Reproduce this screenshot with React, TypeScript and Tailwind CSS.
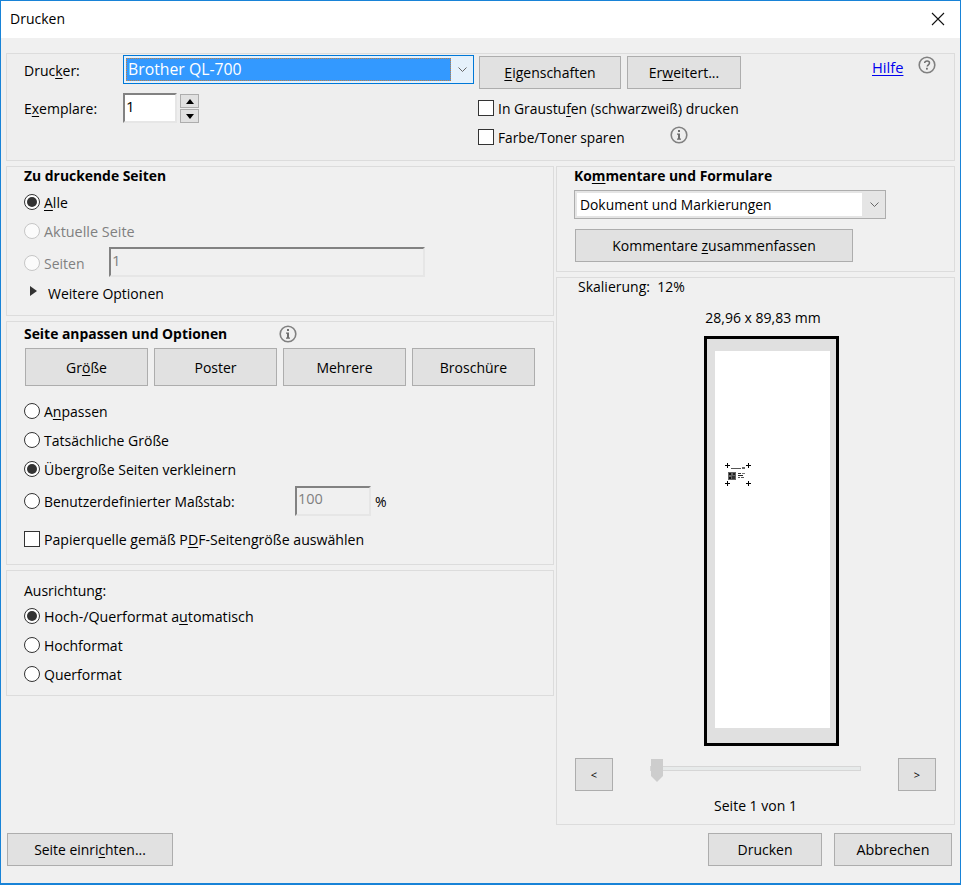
import React from "react";

const Key = ({ children }: { children: React.ReactNode }) => <span className="underline underline-offset-2 decoration-1">{children}</span>;

const Btn = ({ w, h = "h-[33px]", className = "", children }: { w: string; h?: string; className?: string; children: React.ReactNode }) => (
  <button className={`${w} ${h} ${className} shrink-0 flex items-center justify-center pt-[1px] bg-[#e1e1e1] border border-[#adadad] text-black`}>{children}</button>
);

const Radio = ({ checked = false, disabled = false }: { checked?: boolean; disabled?: boolean }) => (
  <span className={`w-4 h-4 shrink-0 rounded-full border flex items-center justify-center ${disabled ? "border-[#c6c6c6] bg-[#fbfbfb]" : "border-[#333333] bg-white"}`}>
    {checked && <span className="w-[10px] h-[10px] rounded-full bg-[#333333]" />}
  </span>
);

const Check = () => <span className="w-4 h-4 shrink-0 border border-[#333333] bg-white block" />;

const Info = ({ className = "" }: { className?: string }) => (
  <svg viewBox="0 0 18 18" className={`w-[18px] h-[18px] shrink-0 ${className}`} fill="none">
    <circle cx="9" cy="9" r="7.8" stroke="#808080" strokeWidth="1.6" />
    <rect x="8" y="4" width="2" height="2" fill="#6e6e6e" />
    <path d="M7 7.6h3v5h1v1.2H7v-1.2h1V8.8H7z" fill="#6e6e6e" />
  </svg>
);

const Help = () => (
  <svg viewBox="0 0 18 18" className="w-[18px] h-[18px] shrink-0" fill="none">
    <circle cx="9" cy="9" r="7.8" stroke="#808080" strokeWidth="1.6" />
    <path d="M6.6 7c.2-1.3 1.2-2 2.5-2 1.4 0 2.4.8 2.4 2 0 1.800-2.300 1.800-2.300 3.600" stroke="#6e6e6e" strokeWidth="1.5" />
    <rect x="8" y="11.800" width="1.800" height="1.800" fill="#6e6e6e" />
  </svg>
);

const Chevron = () => (
  <svg viewBox="0 0 9 5" className="w-[9px] h-[5px] ml-[3px]" fill="none"><path d="M.5.5l4 4 4-4" stroke="#666666" /></svg>
);

const RadioRow = ({ h, checked, disabled, children }: { h: string; checked?: boolean; disabled?: boolean; children: React.ReactNode }) => (
  <div className={`flex items-center gap-1 ${h} ${disabled ? "text-[#808080]" : ""}`}>
    <Radio checked={checked} disabled={disabled} />
    <span className="pt-[2px]">{children}</span>
  </div>
);

const Section = ({ className = "", children }: { className?: string; children: React.ReactNode }) => (
  <section className={`border border-[#dcdcdc] ${className}`}>{children}</section>
);

const Thumbnail = () => (
  <svg viewBox="0 0 26 24" className="w-[26px] h-[24px]" shapeRendering="crispEdges">
    <path d="M2 0v5M0 2.500h5M23 0v5M21 2.500h5M2 18v5M0 20.500h5M23 18v5M21 20.500h5" stroke="#000000" strokeWidth="1" />
    <rect x="6" y="5" width="10" height="1" fill="#555555" />
    <rect x="17" y="4" width="3" height="2" fill="#666666" />
    <rect x="3" y="9" width="8" height="8" fill="#666666" />
    <rect x="4" y="10" width="2" height="2" fill="#111111" />
    <rect x="8" y="10" width="2" height="2" fill="#222222" />
    <rect x="4" y="14" width="2" height="2" fill="#111111" />
    <rect x="7" y="13" width="3" height="3" fill="#333333" />
    <rect x="13" y="10" width="3" height="1" fill="#333333" />
    <rect x="17" y="10" width="3" height="1" fill="#777777" />
    <rect x="13" y="12" width="5" height="1" fill="#222222" />
    <rect x="13" y="14" width="2" height="1" fill="#555555" />
    <rect x="16" y="14" width="3" height="1" fill="#555555" />
  </svg>
);

export default function App() {
  return (
    <div className="w-[961px] h-[885px] box-border border border-[#1883d7] border-b-2 bg-[#f0f0f0] flex flex-col font-['Open_Sans','Noto_Sans',sans-serif] text-[14px] leading-[18px] text-black overflow-hidden">
      <header className="h-[37px] shrink-0 bg-white flex items-center justify-between pl-[9px] pr-[15px] pb-[1px]">
        <span>Drucken</span>
        <svg viewBox="0 0 14 14" className="w-[14px] h-[14px]" fill="none"><path d="M1 1l12 12M13 1L1 13" stroke="#111111" strokeWidth="1.1" /></svg>
      </header>

      <Section className="mt-[15px] ml-[5px] mr-[5px] h-[108px] shrink-0 bg-[#eeeeee] flex">
        <div className="w-[472px] shrink-0 pl-[17px] pt-[1px]">
          <div className="flex items-center">
            <span className="w-[99px] shrink-0 pt-[3px]">Druc<Key>k</Key>er:</span>
            <div className="w-[351px] h-[29px] border border-[#0078d7] bg-[#e5f1fb] flex items-center p-[2px]">
              <div className="w-[325px] h-[23px] bg-[#3399ff] text-white text-[15.8px] pl-[1px] flex items-center border border-dotted border-[#c08040]"><span className="-mt-[1px]">Brother QL-700</span></div>
              <div className="flex-1 flex justify-center"><Chevron /></div>
            </div>
          </div>
          <div className="flex items-start mt-[9px]">
            <span className="w-[99px] shrink-0 pt-[7px]">E<Key>x</Key>emplare:</span>
            <div className="w-[54px] h-[30px] border-2 border-[#828282] border-r-[#e6e6e6] border-b-[#e6e6e6] bg-white pl-[1px] text-[15px] leading-[22px]">1</div>
            <div className="ml-[3px] mt-[1px] flex flex-col gap-[1px]">
              <div className="w-[19px] h-[14px] bg-[#e1e1e1] border border-[#adadad] flex items-center justify-center"><span className="w-0 h-0 border-x-[4px] border-x-transparent border-b-[5px] border-b-black" /></div>
              <div className="w-[19px] h-[14px] bg-[#e1e1e1] border border-[#adadad] flex items-center justify-center"><span className="w-0 h-0 border-x-[4px] border-x-transparent border-t-[5px] border-t-black" /></div>
            </div>
          </div>
        </div>
        <div className="w-[263px] shrink-0 ml-[-1px] pt-[2px]">
          <div className="flex gap-[6px] pl-[1px]">
            <Btn w="w-[142px]"><span><Key>E</Key>igenschaften</span></Btn>
            <Btn w="w-[114px]"><span>Er<Key>w</Key>eitert...</span></Btn>
          </div>
          <div className="flex items-center gap-1 mt-[11px] h-4"><Check /><span className="text-[13.9px] pt-[1px]">In Graustu<Key>f</Key>en (schwarzweiß) drucken</span></div>
          <div className="flex items-center gap-1 mt-[13px] h-4">
            <Check /><span className="w-[130px] shrink-0 whitespace-nowrap pt-[1px] text-[13.7px]">Farbe/Toner sparen</span><Info className="ml-[38px] -mt-[4px]" />
          </div>
        </div>
        <div className="ml-[131px] flex gap-[14px] pt-[2px] items-start">
          <a className="w-[32px] text-[14.7px] text-[#0000ee] underline underline-offset-2 mt-[2px]">Hilfe</a>
          <Help />
        </div>
      </Section>

      <div className="flex mt-[5px] ml-[5px] mr-[5px] gap-[2px]">
        <div className="w-[548px] shrink-0 flex flex-col gap-[5px]">
          <Section className="h-[150px] pl-[17px]">
            <div className="font-bold text-[13.9px] leading-[18px]">Zu druckende Seiten</div>
            <RadioRow h="h-[29px] mt-[2px]" checked><Key>A</Key>lle</RadioRow>
            <RadioRow h="h-[29px] text-[14.4px]" disabled>Aktuelle Seite</RadioRow>
            <div className="flex items-center h-[31px] mt-[1px]">
              <div className="w-[85px] shrink-0 self-center pt-[2px]"><RadioRow h="h-[29px]" disabled>Seiten</RadioRow></div>
              <div className="w-[316px] h-[30px] border-2 border-[#828282] border-r-[#e6e6e6] border-b-[#e6e6e6] pl-[1px] text-[15px] text-[#808080] leading-[22px]">1</div>
            </div>
            <div className="flex items-center h-[30px] pl-[6px]">
              <span className="w-0 h-0 border-y-[5px] border-y-transparent border-l-[7px] border-l-[#333333] -mt-[3px]" />
              <span className="ml-[11px] pt-[3px]">Weitere Optionen</span>
            </div>
          </Section>

          <Section className="h-[244px] pl-[17px]">
            <div className="flex items-center h-[22px] mt-[1px]">
              <span className="w-[246px] shrink-0 font-bold text-[13.9px] whitespace-nowrap">Seite anpassen und Optionen</span>
              <Info className="ml-[9px] -mt-[1px]" />
            </div>
            <div className="flex gap-[6px] mt-[3px] pl-[1px]">
              <Btn w="w-[123px]" h="h-[38px]"><span>Gr<Key>ö</Key>ße</span></Btn>
              <Btn w="w-[123px]" h="h-[38px]">Poster</Btn>
              <Btn w="w-[123px]" h="h-[38px]">Mehrere</Btn>
              <Btn w="w-[123px]" h="h-[38px]">Broschüre</Btn>
            </div>
            <RadioRow h="h-[29px] mt-[10px]">A<Key>n</Key>passen</RadioRow>
            <RadioRow h="h-[29px]">Tatsächliche Größe</RadioRow>
            <RadioRow h="h-[29px]" checked>Übergroße Seiten verkleinern</RadioRow>
            <div className="flex items-center h-[30px] mt-[3px]">
              <div className="w-[271px] shrink-0 text-[13.86px]"><RadioRow h="h-[30px]">Benutzerdefinierter Maßstab:</RadioRow></div>
              <div className="w-[76px] h-[30px] border-2 border-[#828282] border-r-[#e6e6e6] border-b-[#e6e6e6] pl-[1px] text-[14.5px] text-[#808080] leading-[22px]">100</div>
              <span className="ml-[4px] pt-[2px]">%</span>
            </div>
            <div className="flex items-center gap-1 h-4 mt-[15px]"><Check /><span className="text-[14.15px] pt-[2px]">Papierquelle gemäß P<Key>D</Key>F-Seitengröße auswählen</span></div>
          </Section>

          <Section className="h-[126px] pl-[17px]">
            <div className="h-[18px] mt-[11px]">Ausrichtung:</div>
            <RadioRow h="h-[29px] mt-[1px] text-[14.25px]" checked>Hoch-/Querformat a<Key>u</Key>tomatisch</RadioRow>
            <RadioRow h="h-[29px]">Hochformat</RadioRow>
            <RadioRow h="h-[29px]">Querformat</RadioRow>
          </Section>
        </div>

        <div className="flex-1 flex flex-col gap-[5px]">
          <Section className="h-[106px] pl-[17px]">
            <div className="font-bold text-[13.9px] leading-[18px]">Ko<Key>m</Key>mentare und Formulare</div>
            <div className="w-[312px] h-[29px] mt-[5px] border border-[#adadad] bg-[#e5e5e5] flex items-center p-[2px]">
              <div className="w-[285px] h-[23px] bg-white text-[13.85px] pl-[3px] flex items-center">Dokument und Markierungen</div>
              <div className="flex-1 flex justify-center"><Chevron /></div>
            </div>
            <Btn w="w-[278px]" className="mt-[10px] ml-[1px]"><span>Kommentare <Key>z</Key>usammenfassen</span></Btn>
          </Section>

          <Section className="h-[548px] flex flex-col items-center">
            <div className="self-start pl-[21px] h-[18px]">Skalierung:&nbsp;&nbsp;12%</div>
            <div className="mt-[13px] h-[18px] ml-[15px]">28,96 x 89,83 mm</div>
            <div className="mt-[9px] ml-[32px] w-[135px] h-[410px] border-[3px] border-black bg-[#e0e0e0] pt-[12px] pl-[8px] shrink-0">
              <div className="w-[115px] h-[377px] bg-white pt-[112px] pl-[10px]"><Thumbnail /></div>
            </div>
            <div className="self-stretch flex items-start mt-[12px] pl-[18px]">
              <Btn w="w-[38px]"><span className="text-[11px]">&lt;</span></Btn>
              <div className="ml-[37px] w-[211px] h-[24px] flex items-center relative mt-[1px]">
                <div className="w-full h-[5px] bg-[#e7eaea] border border-[#d6d6d6] -mt-[6px]" />
                <svg viewBox="0 0 14 23" className="absolute left-0 top-0 w-[14px] h-[23px]"><path d="M1 0h12v17l-6 6-6-6z" fill="#cdcdcd" /></svg>
              </div>
              <Btn w="w-[38px]" className="ml-[37px]"><span className="text-[11px]">&gt;</span></Btn>
            </div>
            <div className="mt-[6px] h-[18px]">Seite 1 von 1</div>
          </Section>
        </div>
      </div>

      <footer className="flex mt-[8px] ml-[6px] mr-[8px]">
        <Btn w="w-[166px]"><span className="text-[13.9px]">Seite einri<Key>c</Key>hten...</span></Btn>
        <Btn w="w-[114px]" className="ml-auto">Drucken</Btn>
        <Btn w="w-[118px]" className="ml-[12px]"><span className="text-[14.3px]">Abbrechen</span></Btn>
      </footer>
    </div>
  );
}
